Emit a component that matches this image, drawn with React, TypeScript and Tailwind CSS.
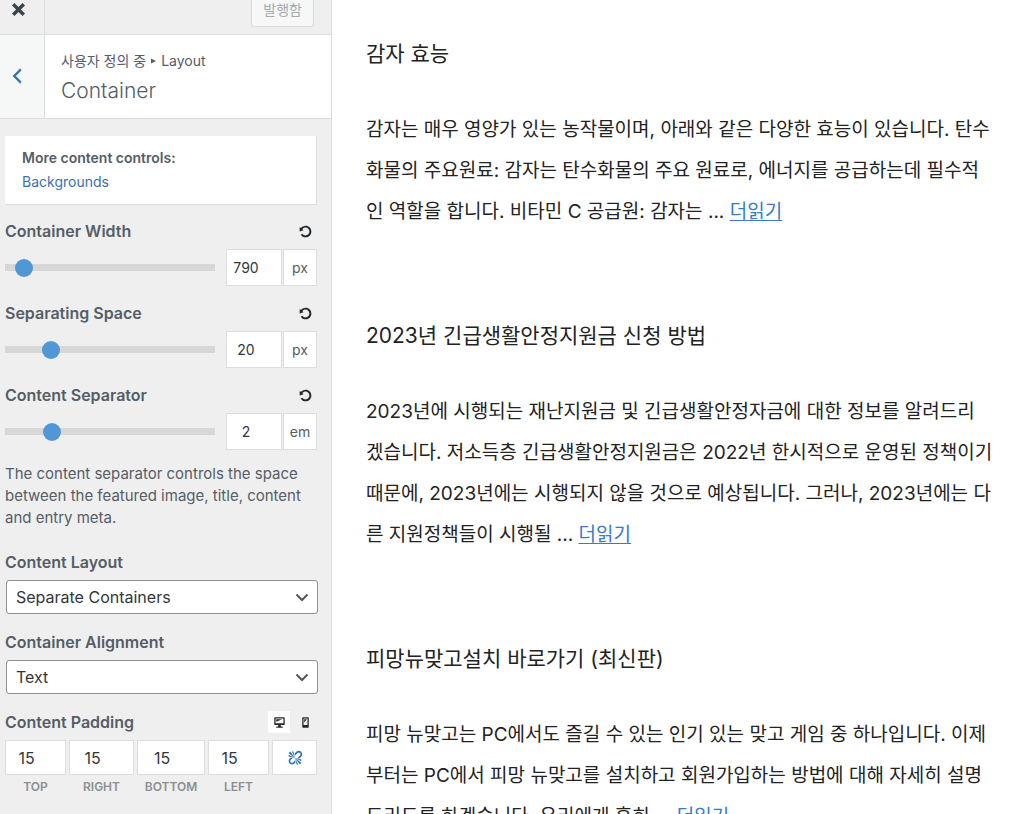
import React, { useState } from 'react';

const ICONS = {
  close: 'M12.12 10l3.53 3.53-2.12 2.12L10 12.12l-3.54 3.54-2.12-2.12L7.88 10 4.34 6.46l2.12-2.12L10 7.88l3.54-3.53 2.12 2.12z',
  back: 'M14 5l-5 5 5 5-1 2-7-7 7-7z',
  reset: 'M10.25 1.02c5.1 0 8.75 4.04 8.75 9s-3.65 9-8.75 9c-3.2 0-6.02-1.59-7.68-3.99l2.59-1.52c1.1 1.5 2.86 2.51 4.84 2.51 3.3 0 6-2.79 6-6s-2.7-6-6-6c-1.97 0-3.72 1-4.82 2.49L7 8.02l-6 2v-7L2.89 4.6c1.69-2.17 4.36-3.58 7.36-3.58z',
  desktop: 'M3 2h14c.55 0 1 .45 1 1v10c0 .55-.45 1-1 1h-5v2h2c.55 0 1 .45 1 1v1H5v-1c0-.55.45-1 1-1h2v-2H3c-.55 0-1-.45-1-1V3c0-.55.45-1 1-1zm13 9V4H4v7h12zM5 5h9L5 9V5z',
  phone: 'M6 2h8c.55 0 1 .45 1 1v14c0 .55-.45 1-1 1H6c-.55 0-1-.45-1-1V3c0-.55.45-1 1-1zm7 12V4H7v10h6zM8 5h4l-4 5V5z',
  unlink: 'M17.74 2.26c1.68 1.69 1.68 4.41 0 6.1l-1.53 1.52c-.32.33-.69.58-1.08.77L13 10l1.69-1.64.76-.77.76-.76c.84-.84.84-2.2 0-3.04-.84-.85-2.2-.85-3.04 0l-.77.76-.76.76L10 7l-.65-2.14c.19-.38.44-.75.77-1.07l1.52-1.53c1.69-1.68 4.42-1.68 6.1 0zM2 4l8 6-6-8zm4-2l4 8-2-8H6zM2 6l8 4-8-2V6zm7.36 7.69L10 13l.74 2.35-1.38 1.39c-1.69 1.68-4.41 1.68-6.1 0-1.68-1.68-1.68-4.42 0-6.1l1.39-1.38L7 10l-.69.64-1.52 1.53c-.85.84-.85 2.2 0 3.04.84.85 2.2.85 3.04 0zM18 16l-8-6 6 8zm-4 2l-4-8 2 8h2zm4-4l-8-4 8 2v2z',
};

const Icon: React.FC<{ name: keyof typeof ICONS; size: number }> = ({ name, size }) => (
  <svg width={size} height={size} viewBox="0 0 20 20" fill="currentColor" aria-hidden="true">
    <path d={ICONS[name]} />
  </svg>
);

interface RangeControlProps {
  id: string;
  label: string;
  initial: number;
  min: number;
  max: number;
  unit: string;
}

const RangeControl: React.FC<RangeControlProps> = ({ id, label, initial, min, max, unit }) => {
  const [value, setValue] = useState(String(initial));

  return (
    <div className="mb-[15px]">
      <div className="flex items-center justify-between h-6 mb-1.5 pr-[5px]">
        <label htmlFor={id} className="text-base font-semibold">{label}</label>
        <button aria-label={`Reset ${label}`} className="text-[#23282d]" onClick={() => setValue(String(initial))}>
          <Icon name="reset" size={13} />
        </button>
      </div>
      <div className="flex items-center h-[37px]">
        <input
          id={id}
          type="range"
          min={min}
          max={max}
          value={value}
          onChange={(e) => setValue(e.target.value)}
          className="flex-1 min-w-0 h-[7px] mr-[11px] appearance-none bg-[#d7d7d7] [&::-webkit-slider-thumb]:appearance-none [&::-webkit-slider-thumb]:size-[18px] [&::-webkit-slider-thumb]:rounded-full [&::-webkit-slider-thumb]:bg-[#5297d5]"
        />
        <input
          type="text"
          aria-label={`${label} value`}
          value={value}
          onChange={(e) => setValue(e.target.value)}
          className="w-14 h-full pr-4 text-center text-sm text-[#32373c] bg-white border border-[#ddd]"
        />
        <span className="w-[34px] h-full ml-px flex items-center justify-center text-sm bg-white border border-[#ddd]">{unit}</span>
      </div>
    </div>
  );
};

const SelectControl: React.FC<{ id: string; label: string; options: string[] }> = ({ id, label, options }) => (
  <div className="mb-4">
    <label htmlFor={id} className="block h-6 mb-1.5 text-base leading-6 font-semibold">{label}</label>
    <div className="relative ml-px -mr-px">
      <select id={id} className="block w-full h-[34px] pl-[9px] pr-8 appearance-none text-base text-[#32373c] bg-white border border-[#8c8f94] rounded-[3px]">
        {options.map(option => <option key={option}>{option}</option>)}
      </select>
      <svg className="absolute right-2 top-2 pointer-events-none" width="16" height="18" viewBox="0 0 16 18" fill="none" stroke="#555" strokeWidth="2">
        <path d="M2.5 6.5l5.5 5.5 5.5-5.5" />
      </svg>
    </div>
  </div>
);

const SIDES = ['Top', 'Right', 'Bottom', 'Left'];

const PaddingControl: React.FC = () => {
  const [padding, setPadding] = useState<Record<string, string>>({ Top: '15', Right: '15', Bottom: '15', Left: '15' });

  return (
    <div>
      <div className="flex items-center h-6 mb-1.5 pr-px">
        <span className="flex-1 text-base font-semibold">Content Padding</span>
        <button aria-label="Desktop" className="size-[22px] mr-1 flex items-center justify-center bg-white text-[#23282d]">
          <Icon name="desktop" size={13} />
        </button>
        <button aria-label="Mobile" className="size-[22px] flex items-center justify-center text-[#23282d]">
          <Icon name="phone" size={13} />
        </button>
      </div>
      <div className="grid grid-cols-[61fr_65fr_68fr_61fr_45fr] gap-[3px]">
        {SIDES.map(side => (
          <div key={side} className="flex flex-col">
            <input
              id={`padding-${side}`}
              type="text"
              value={padding[side]}
              onChange={(e) => setPadding({ ...padding, [side]: e.target.value })}
              className="w-full h-[35px] pr-[18px] text-center text-base text-[#32373c] bg-white border border-[#ddd]"
            />
            <label htmlFor={`padding-${side}`} className="mt-1 text-center text-xs leading-4 font-semibold uppercase text-[#8a8f94]">{side}</label>
          </div>
        ))}
        <button aria-label="Link values" className="h-[35px] flex items-center justify-center text-[#2f76b3] bg-white border border-[#ddd]">
          <Icon name="unlink" size={16} />
        </button>
      </div>
    </div>
  );
};

interface Post {
  title: string;
  lines: string[];
}

const POSTS: Post[] = [
  {
    title: '감자 효능',
    lines: [
      '감자는 매우 영양가 있는 농작물이며, 아래와 같은 다양한 효능이 있습니다. 탄수',
      '화물의 주요원료: 감자는 탄수화물의 주요 원료로, 에너지를 공급하는데 필수적',
      '인 역할을 합니다. 비타민 C 공급원: 감자는 ...',
    ],
  },
  {
    title: '2023년 긴급생활안정지원금 신청 방법',
    lines: [
      '2023년에 시행되는 재난지원금 및 긴급생활안정자금에 대한 정보를 알려드리',
      '겠습니다. 저소득층 긴급생활안정지원금은 2022년 한시적으로 운영된 정책이기',
      '때문에, 2023년에는 시행되지 않을 것으로 예상됩니다. 그러나, 2023년에는 다',
      '른 지원정책들이 시행될 ...',
    ],
  },
  {
    title: '피망뉴맞고설치 바로가기 (최신판)',
    lines: [
      '피망 뉴맞고는 PC에서도 즐길 수 있는 인기 있는 맞고 게임 중 하나입니다. 이제',
      '부터는 PC에서 피망 뉴맞고를 설치하고 회원가입하는 방법에 대해 자세히 설명',
      '드리도록 하겠습니다. 우리에게 흔히 ...',
    ],
  },
];

const Sidebar: React.FC = () => (
  <aside className="w-[332px] shrink-0 bg-[#efefef] border-r border-[#ddd] text-[#555d66] font-['Inter','Noto_Sans_CJK_KR',sans-serif]">
    <div className="flex items-start h-[35px] border-b border-[#ddd]">
      <button aria-label="닫기" className="w-[45px] h-full pr-2 pb-[15px] flex items-center justify-center border-r border-[#ddd] text-[#3c434a]">
        <Icon name="close" size={23} />
      </button>
      <button disabled className="ml-auto mr-[17px] h-[27px] px-[11px] pb-[6px] text-sm leading-5 text-[#a7aaad] bg-[#f6f7f7] border border-t-0 border-[#dcdcde] rounded-b-[3px]">발행함</button>
    </div>

    <header className="flex h-[84px] bg-white border-b border-[#ddd]">
      <button aria-label="뒤로" className="w-[45px] pr-2.5 pb-0.5 flex items-center justify-center bg-[#f6f7f7] border-r border-[#ddd] text-[#3572b0]">
        <Icon name="back" size={22} />
      </button>
      <div className="pl-4 pt-4">
        <p className="flex items-center text-sm leading-5">
          사용자 정의 중
          <svg className="mx-[5px]" width="5" height="6" viewBox="0 0 5 6" fill="currentColor"><path d="M0 0.5l5 2.5-5 2.5z" /></svg>
          Layout
        </p>
        <h1 className="mt-[5px] text-[21px] leading-[30px] font-light">Container</h1>
      </div>
    </header>

    <div className="pl-[5px] pr-[14px] pt-[17px]">
      <div className="mb-3.5 px-[17px] pt-2.5 pb-2.5 bg-white border-b border-r border-[#ddd] text-sm leading-6">
        <p className="font-semibold">More content controls:</p>
        <a href="#backgrounds" className="text-[#3b70b0]">Backgrounds</a>
      </div>

      <RangeControl id="container-width" label="Container Width" initial={790} min={700} max={2400} unit="px" />
      <RangeControl id="separating-space" label="Separating Space" initial={20} min={0} max={105} unit="px" />
      <RangeControl id="content-separator" label="Content Separator" initial={2} min={0} max={10} unit="em" />
      <p className="-mt-0.5 mb-[21px] pr-3 text-[15px] leading-[22px]">
        The content separator controls the space between the featured image, title, content and entry meta.
      </p>

      <SelectControl id="content-layout" label="Content Layout" options={['Separate Containers', 'One Container']} />
      <SelectControl id="container-alignment" label="Container Alignment" options={['Text', 'Boxes']} />
      <PaddingControl />
    </div>
  </aside>
);

const App: React.FC = () => (
  <div className="flex h-screen overflow-hidden bg-white">
    <Sidebar />
    <main className="flex-1 min-w-0 pl-[34px] pt-[38px] text-[#222] font-['Inter','Noto_Sans_CJK_KR',sans-serif]">
      {POSTS.map(post => (
        <article key={post.title} className="mb-[88px]">
          <h2 className="mb-[39px] text-[21px] leading-8">{post.title}</h2>
          <p className="text-[19px] leading-[41px] whitespace-nowrap">
            {post.lines.map((line, i) => (
              <React.Fragment key={line}>
                {i > 0 && <br />}
                {line}
              </React.Fragment>
            ))}{' '}
            <a href="#more" className="text-[#3879c8] underline underline-offset-2">더읽기</a>
          </p>
        </article>
      ))}
    </main>
  </div>
);

export default App;
